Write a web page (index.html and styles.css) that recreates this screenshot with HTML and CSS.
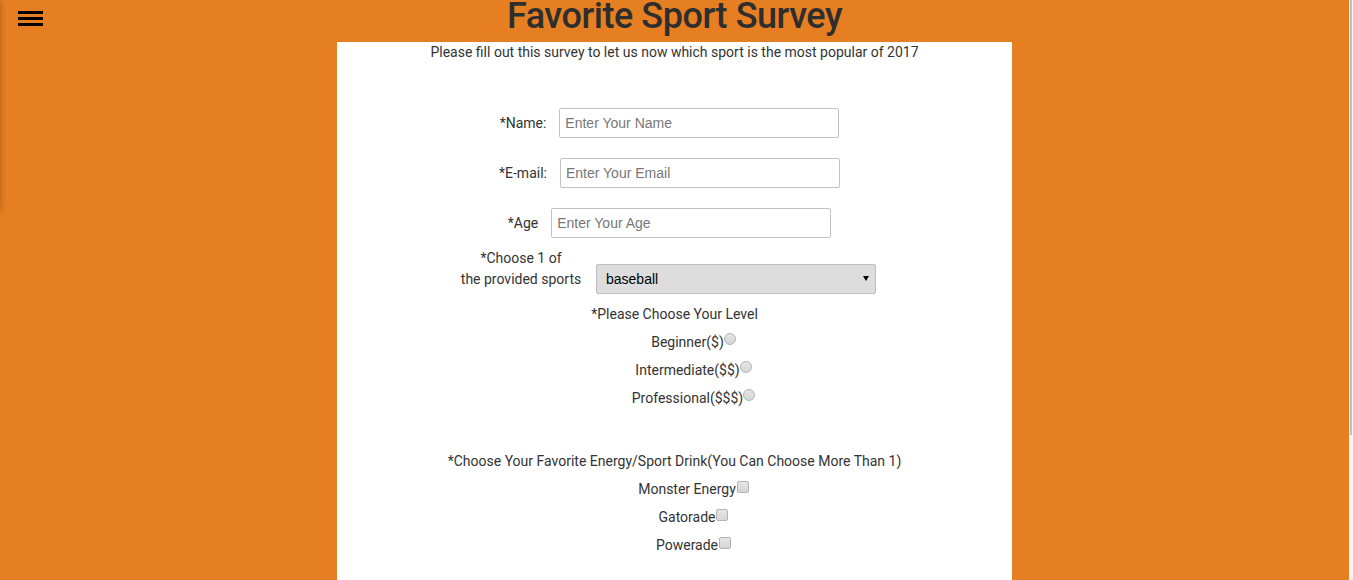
FILE: index.html
```html
<!DOCTYPE html>
<html lang="en">
<head>
<meta charset="utf-8">
<title>Favorite Sport Survey</title>
<link rel="stylesheet" href="styles.css">
</head>
<body>
<nav class="sidenav" aria-hidden="true"></nav>
<div class="scrolltrack" aria-hidden="true"><div class="scrollthumb"></div></div>
<header class="topbar">
  <button class="menu-btn" type="button" aria-label="Menu">
    <span class="bar"></span><span class="bar"></span><span class="bar"></span>
  </button>
  <h1 class="title">Favorite Sport Survey</h1>
  <div class="spacer"></div>
</header>
<main class="card">
  <p class="intro">Please fill out this survey to let us now which sport is the most popular of 2017</p>
  <form class="survey">
    <div class="row row-name">
      <label class="lbl" for="name">*Name:</label>
      <input class="field" id="name" type="text" placeholder="Enter Your Name">
    </div>
    <div class="row row-email">
      <label class="lbl" for="email">*E-mail:</label>
      <input class="field" id="email" type="email" placeholder="Enter Your Email">
    </div>
    <div class="row row-age">
      <label class="lbl" for="age">*Age</label>
      <input class="field" id="age" type="text" placeholder="Enter Your Age">
    </div>
    <div class="row row-sport">
      <label class="lbl lbl-sport" for="sport">*Choose 1 of<br>the provided sports</label>
      <span class="select-wrap">
        <select class="dropdown" id="sport">
          <option>baseball</option>
          <option>basketball</option>
          <option>football</option>
          <option>soccer</option>
        </select>
      </span>
    </div>
    <p class="heading heading-level">*Please Choose Your Level</p>
    <p class="option">Beginner($)<input class="radio" type="radio" name="level"></p>
    <p class="option">Intermediate($$)<input class="radio" type="radio" name="level"></p>
    <p class="option">Professional($$$)<input class="radio" type="radio" name="level"></p>
    <p class="heading heading-drink">*Choose Your Favorite Energy/Sport Drink(You Can Choose More Than 1)</p>
    <p class="option">Monster Energy<input class="check" type="checkbox"></p>
    <p class="option">Gatorade<input class="check" type="checkbox"></p>
    <p class="option">Powerade<input class="check" type="checkbox"></p>
  </form>
</main>
</body>
</html>
```

FILE: styles.css
```css
body {
  margin: 0 4px 0 0;
  background: #e67e22;
  font-family: Roboto, "Liberation Sans", Arial, sans-serif;
  font-size: 14px;
  color: #333;
}

.scrolltrack {
  position: fixed;
  top: 0;
  right: 0;
  width: 4px;
  height: 100%;
  background: #f4f4f4;
  z-index: 10;
}

.scrollthumb {
  width: 2px;
  height: 75%;
  margin-left: 1px;
  background: #c1c1c1;
}

.sidenav {
  position: fixed;
  top: 0;
  left: -250px;
  width: 250px;
  height: 210px;
  background: #e67e22;
  box-shadow: 0 0 6px rgba(60, 30, 0, 0.35);
}

.topbar {
  display: grid;
  grid-template-columns: 1fr auto 1fr;
  align-items: start;
  height: 42px;
}

.menu-btn {
  justify-self: start;
  display: flex;
  flex-direction: column;
  gap: 3px;
  margin: 11px 0 0 18px;
  padding: 0;
  border: 0;
  background: none;
  cursor: pointer;
}

.bar {
  display: block;
  width: 25px;
  height: 3px;
  background: #000;
}

.title {
  margin: 0;
  font-family: Roboto, sans-serif;
  font-weight: 500;
  font-size: 36px;
  letter-spacing: -0.45px;
  line-height: 32px;
  color: #2e2e2e;
  white-space: nowrap;
}

.card {
  width: 50%;
  margin: 0 auto;
  background: #fff;
  padding-bottom: 214px;
}

.intro {
  margin: 0;
  line-height: 20px;
  text-align: center;
}

.survey {
  display: flex;
  flex-direction: column;
  align-items: center;
  margin-top: 46px;
}

.row {
  display: flex;
  align-items: center;
  gap: 13px;
  padding-right: 10px;
}

.row-name,
.row-email {
  margin-bottom: 20px;
}

.row-age {
  margin-bottom: 10px;
}

.row-sport {
  align-items: flex-end;
  gap: 14px;
  padding-right: 13px;
}

.lbl {
  line-height: 20px;
}

.lbl-sport {
  width: 122px;
  line-height: 21px;
  text-align: center;
  margin-bottom: 4px;
}

.field {
  box-sizing: border-box;
  width: 280px;
  height: 30px;
  padding: 0 5px;
  border: 1px solid #c2c2c2;
  border-radius: 2px;
  font-family: "Liberation Sans", Arial, sans-serif;
  font-size: 14px;
  color: #333;
  background: #fff;
}

.field::placeholder {
  color: #777;
}

.select-wrap {
  position: relative;
  display: block;
}

.select-wrap::after {
  content: "";
  position: absolute;
  right: 7px;
  top: 12px;
  border-left: 3px solid transparent;
  border-right: 3px solid transparent;
  border-top: 5px solid #000;
  pointer-events: none;
}

.dropdown {
  appearance: none;
  -webkit-appearance: none;
  display: block;
  box-sizing: border-box;
  width: 280px;
  height: 30px;
  padding: 0 9px;
  border: 1px solid #bdbdbd;
  border-radius: 2px;
  background: #dddddd;
  font-family: "Liberation Sans", Arial, sans-serif;
  font-size: 14px;
  color: #000;
}

.heading {
  margin: 0;
  line-height: 28px;
  text-align: center;
}

.heading-level {
  margin-top: 6px;
}

.heading-drink {
  margin-top: 35px;
}

.option {
  margin: 0;
  line-height: 28px;
  padding-left: 38px;
  white-space: nowrap;
}

.radio {
  appearance: none;
  -webkit-appearance: none;
  display: inline-block;
  box-sizing: border-box;
  width: 12px;
  height: 12px;
  margin: 0 0 2px 0;
  border: 1px solid #b3b3b3;
  border-radius: 50%;
  background: linear-gradient(#e6e6e6, #d6d6d6);
  vertical-align: baseline;
}

.check {
  appearance: none;
  -webkit-appearance: none;
  display: inline-block;
  box-sizing: border-box;
  width: 12px;
  height: 12px;
  margin: 0 0 1px 1px;
  border: 1px solid #b3b3b3;
  border-radius: 2px;
  background: linear-gradient(#e6e6e6, #d6d6d6);
  vertical-align: baseline;
}
```
